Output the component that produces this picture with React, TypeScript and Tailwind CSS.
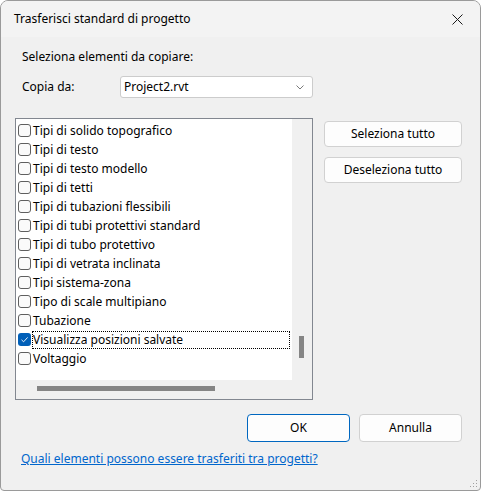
import React from 'react'

const ITEMS = [
  'Tipi di solido topografico',
  'Tipi di testo',
  'Tipi di testo modello',
  'Tipi di tetti',
  'Tipi di tubazioni flessibili',
  'Tipi di tubi protettivi standard',
  'Tipi di tubo protettivo',
  'Tipi di vetrata inclinata',
  'Tipi sistema-zona',
  'Tipo di scale multipiano',
  'Tubazione',
  'Visualizza posizioni salvate',
  'Voltaggio',
]

const CHECKED = 'Visualizza posizioni salvate'

function CheckBox({ checked }: { checked: boolean }) {
  if (checked) {
    return (
      <span className="flex h-[13px] w-[13px] shrink-0 items-center justify-center rounded-[3px] bg-[#005fb8]">
        <svg width="9" height="9" viewBox="0 0 9 9" fill="none">
          <path d="M1.5 4.8 L3.6 6.8 L7.6 2.4" stroke="#ffffff" strokeWidth="0.9" />
        </svg>
      </span>
    )
  }
  return <span className="h-[13px] w-[13px] shrink-0 rounded-[3px] border border-[#5f5f5f] bg-[#fafafa]" />
}

function ListRow({ label }: { label: string }) {
  const checked = label === CHECKED
  return (
    <div className="flex h-[19px] items-center pl-[2px]">
      <CheckBox checked={checked} />
      <span
        className={`ml-[1px] flex h-[18px] items-center whitespace-nowrap pr-1 ${
          checked ? 'w-[258px] border border-dotted border-black' : 'border border-transparent'
        }`}
      >
        {label}
      </span>
    </div>
  )
}

function Button({
  children,
  primary,
  className,
}: {
  children: React.ReactNode
  primary?: boolean
  className: string
}) {
  return (
    <button
      className={`flex items-center justify-center rounded-[4px] bg-[#fdfdfd] text-black ${
        primary ? 'border border-[#0067c0]' : 'border border-[#d1d1d1]'
      } ${className}`}
    >
      {children}
    </button>
  )
}

export default function App() {
  return (
    <div
      className="flex h-[491px] w-[481px] flex-col overflow-hidden rounded-t-[8px] rounded-b-[4px] border border-[#9a9a9a] bg-[#f0f0f0] text-[12px] text-black"
      style={{ fontFamily: '"Noto Sans", "Open Sans", sans-serif' }}
    >
      {/* Title bar */}
      <div className="flex h-[36px] shrink-0 items-center justify-between bg-[#f3f3f3] pl-[13px] pr-[17px]">
        <span className="text-[12px]">Trasferisci standard di progetto</span>
        <svg width="11" height="11" viewBox="0 0 11 11" fill="none">
          <path d="M0.5 0.5 L10.5 10.5 M10.5 0.5 L0.5 10.5" stroke="#1a1a1a" strokeWidth="1" />
        </svg>
      </div>

      {/* Body */}
      <div className="relative flex flex-1 flex-col pl-[14px] pr-[18px]">
        <div className="ml-[7px] mt-[12px] flex h-[16px] items-center">Seleziona elementi da copiare:</div>

        <div className="mt-[11px] flex h-[22px] items-center">
          <span className="ml-[7px] w-[98px]">Copia da:</span>
          <div className="flex h-[22px] w-[193px] items-center justify-between rounded-[3px] border border-[#cccccc] bg-white pl-[3px] pr-[8px]">
            <span>Project2.rvt</span>
            <svg width="8" height="5" viewBox="0 0 8 5" fill="none">
              <path d="M0.5 0.5 L4 4 L7.5 0.5" stroke="#6b6b6b" strokeWidth="0.9" />
            </svg>
          </div>
        </div>

        <div className="mt-[20px] flex">
          {/* List box */}
          <div className="flex h-[282px] w-[298px] flex-col border border-[#828790]">
            <div className="flex flex-1">
              <div className="flex-1 overflow-hidden bg-white pt-[2px]">
                {ITEMS.map(item => (
                  <ListRow key={item} label={item} />
                ))}
              </div>
              <div className="relative w-[20px] bg-[#f0f0f0]">
                <div className="absolute left-[7px] top-[217px] h-[22px] w-[5px] bg-[#858585]" />
              </div>
            </div>
            <div className="relative h-[19px] bg-[#f0f0f0]">
              <div className="absolute left-[21px] top-[6px] h-[5px] w-[178px] bg-[#858585]" />
            </div>
          </div>

          {/* Side buttons */}
          <div className="ml-[11px] mt-[3px] flex flex-col gap-[10px]">
            <Button className="h-[26px] w-[138px]">Seleziona tutto</Button>
            <Button className="h-[26px] w-[138px]">Deseleziona tutto</Button>
          </div>
        </div>

        <div className="mt-[14px] flex justify-end gap-[9px]">
          <Button primary className="h-[28px] w-[103px]">
            OK
          </Button>
          <Button className="h-[28px] w-[103px]">Annulla</Button>
        </div>

        <a className="ml-[6px] mt-[8px] w-fit text-[#0066cc] underline" href="#">
          Quali elementi possono essere trasferiti tra progetti?
        </a>

        {/* Resize grip */}
        <svg className="absolute bottom-[2px] right-[2px]" width="9" height="9" viewBox="0 0 9 9">
          <rect x="7" y="1" width="1" height="1" fill="#a0a0a0" />
          <rect x="4" y="4" width="1" height="1" fill="#a0a0a0" />
          <rect x="7" y="4" width="1" height="1" fill="#a0a0a0" />
          <rect x="1" y="7" width="1" height="1" fill="#a0a0a0" />
          <rect x="4" y="7" width="1" height="1" fill="#a0a0a0" />
          <rect x="7" y="7" width="1" height="1" fill="#a0a0a0" />
        </svg>
      </div>
    </div>
  )
}
